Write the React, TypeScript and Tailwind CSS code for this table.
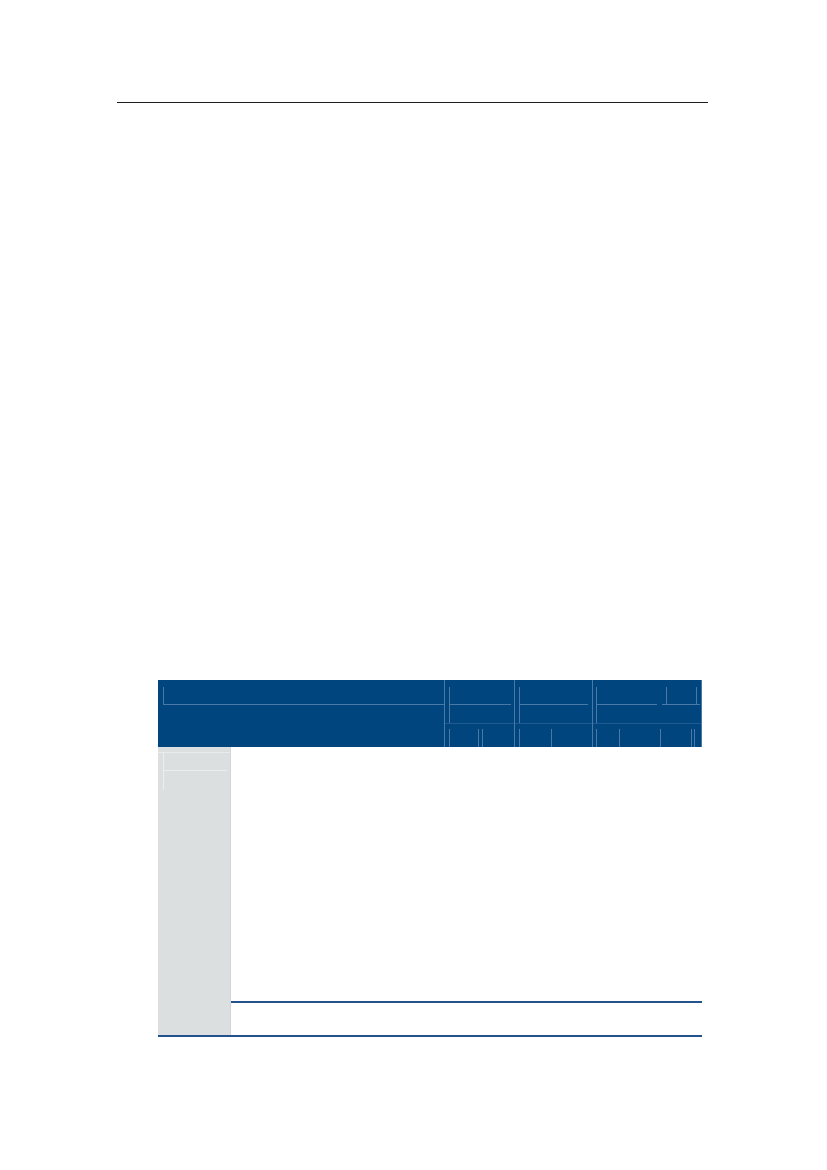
export default function App() {
  return (
    <div className="w-[827px] h-[1170px] bg-white overflow-hidden pt-[102px]">
      {/* Running header rule */}
      <div className="ml-[117px] w-[591px] h-px bg-[#1e1e1e]" />

      {/* Table */}
      <div className="ml-[158px] mt-[577px] w-[544px]">
        {/* Header band */}
        <div className="flex h-[67px] bg-[#00457e]">
          <div className="w-[286px] pl-[5px] pt-[7px]">
            <div className="h-[18px] border-l border-b border-[#4a78a7]" />
          </div>

          {/* Group 1 */}
          <div className="w-[70px] flex flex-col border-l border-[#4a78a7]">
            <div className="h-[43px] pl-[4px] pt-[7px]">
              <div className="h-[36px] border-l border-[#4a78a7]">
                <div className="h-[18px] w-[61px] border-b border-[#4a78a7]" />
              </div>
            </div>
            <div className="flex-1 flex pl-[4px] pt-[5px] border-t border-[#1f5a90]">
              <div className="w-[29px] border-l border-[#4a78a7]" />
              <div className="w-[4px] border-l border-[#4a78a7]" />
              <div className="flex-1 border-l border-[#4a78a7]" />
            </div>
          </div>

          {/* Group 2 */}
          <div className="w-[78px] flex flex-col border-l border-[#4a78a7]">
            <div className="h-[43px] pl-[4px] pt-[7px]">
              <div className="h-[36px] border-l border-[#4a78a7]">
                <div className="h-[18px] w-[68px] border-b border-[#4a78a7]" />
              </div>
            </div>
            <div className="flex-1 flex pl-[4px] pt-[5px] border-t border-[#1f5a90]">
              <div className="w-[32px] border-l border-[#4a78a7]" />
              <div className="flex-1 border-l border-[#4a78a7]" />
            </div>
          </div>

          {/* Group 3 */}
          <div className="w-[110px] flex flex-col border-l border-r border-[#4a78a7]">
            <div className="h-[43px] pl-[3px] pt-[7px]">
              <div className="h-[36px] border-l border-[#4a78a7] flex items-start">
                <div className="h-[18px] w-[60px] border-b border-[#4a78a7]" />
                <div className="ml-[5px] h-[18px] w-[38px] border-b border-[#4a78a7] flex">
                  <div className="ml-[4px] w-[31px] border-l border-r border-[#4a78a7]" />
                </div>
              </div>
            </div>
            <div className="flex-1 flex pl-[3px] pt-[5px] border-t border-[#1f5a90]">
              <div className="w-[23px] border-l border-[#4a78a7]" />
              <div className="w-[41px] border-l border-[#4a78a7]" />
              <div className="w-[31px] border-l border-[#4a78a7]" />
              <div className="w-[3px] border-l border-[#4a78a7]" />
              <div className="flex-1 border-l border-[#4a78a7]" />
            </div>
          </div>
        </div>

        {/* Body */}
        <div className="flex h-[288px]">
          <div className="w-[73px] bg-[#dcdfe0] border-r border-[#d2d6d7] pt-[5px]">
            <div className="border-t border-[#e9ebec]">
              <div className="ml-[5px] h-[37px] w-[64px] border-l border-[#eceeee]">
                <div className="h-[18px] border-b border-[#eceeee]" />
              </div>
            </div>
          </div>
          <div className="flex-1 flex flex-col">
            <div className="h-[254px]" />
            <div className="h-[2px] bg-[#24528f]" />
            <div className="flex-1" />
          </div>
        </div>
        <div className="h-[2px] bg-[#24528f]" />
      </div>
    </div>
  );
}
